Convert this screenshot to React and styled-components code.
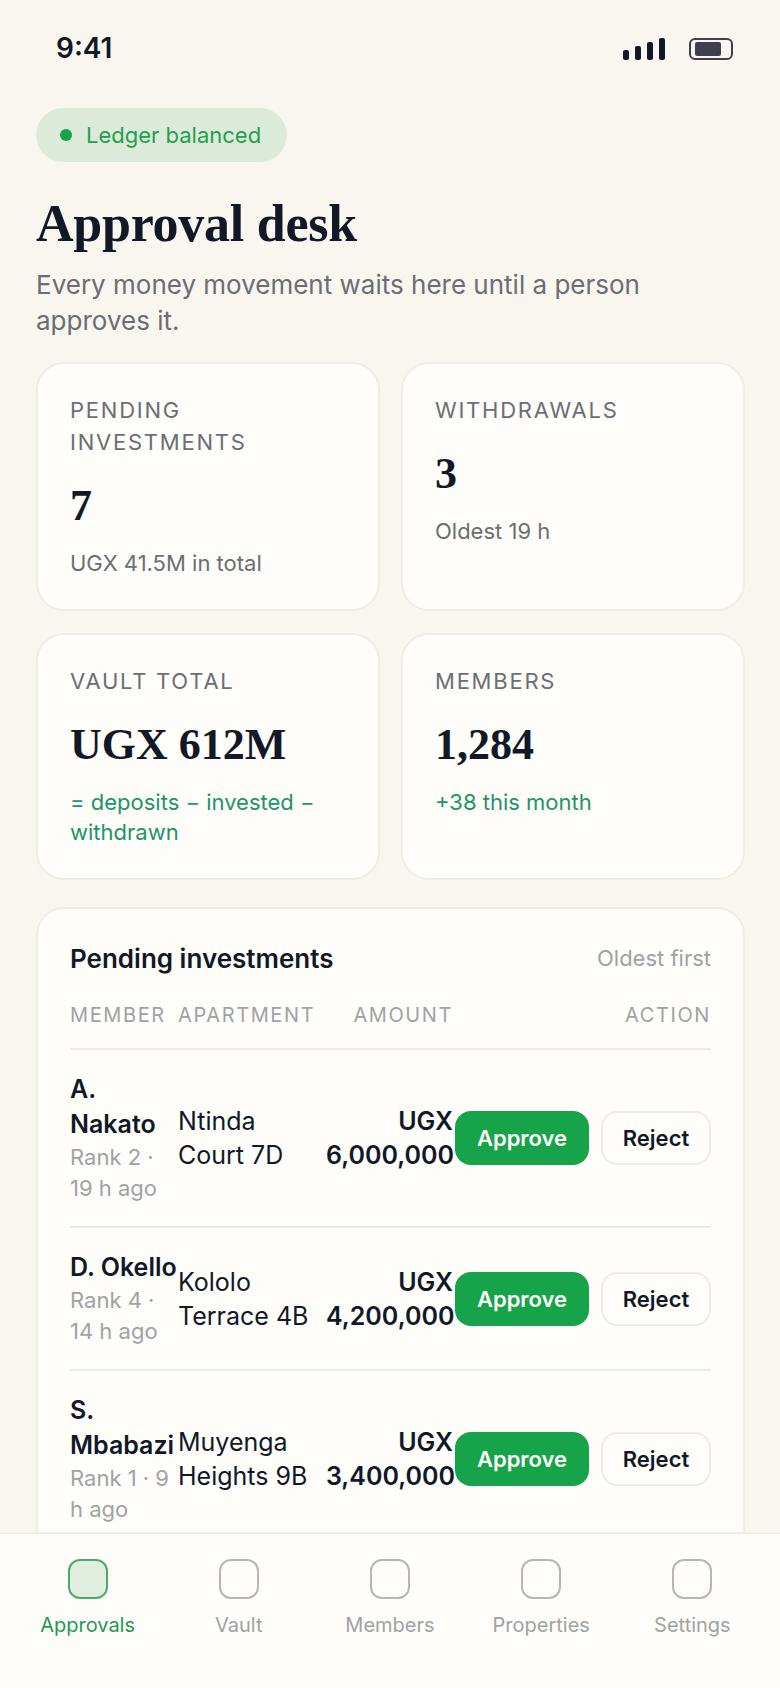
import React from "react";
import styled, { createGlobalStyle } from "styled-components";

const stats = [
    { label: "Pending investments", value: "7", note: "UGX 41.5M in total" },
    { label: "Withdrawals", value: "3", note: "Oldest 19 h" },
    { label: "Vault total", value: "UGX 612M", note: "= deposits − invested − withdrawn", good: true },
    { label: "Members", value: "1,284", note: "+38 this month", good: true },
];

const pending = [
    { name: "A. Nakato", meta: "Rank 2 · 19 h ago", apartment: "Ntinda Court 7D", amount: "UGX 6,000,000" },
    { name: "D. Okello", meta: "Rank 4 · 14 h ago", apartment: "Kololo Terrace 4B", amount: "UGX 4,200,000" },
    { name: "S. Mbabazi", meta: "Rank 1 · 9 h ago", apartment: "Muyenga Heights 9B", amount: "UGX 3,400,000" },
];

const tabs = ["Approvals", "Vault", "Members", "Properties", "Settings"];

export default function App(){
    return(
        <Shell>
            <GlobalStyle/>
            <StatusBar>
                <Clock>9:41</Clock>
                <StatusIcons>
                    <SignalBars>
                        {[10, 14, 18, 22].map(h => <SignalBar key={h} $height={h}/>)}
                    </SignalBars>
                    <Battery><BatteryFill/></Battery>
                </StatusIcons>
            </StatusBar>

            <Content>
                <Pill><PillDot/>Ledger balanced</Pill>
                <Title>Approval desk</Title>
                <Subtitle>Every money movement waits here until a person approves it.</Subtitle>

                <StatGrid>
                    {stats.map(stat => (
                        <StatCard key={stat.label}>
                            <StatLabel>{stat.label}</StatLabel>
                            <StatValue>{stat.value}</StatValue>
                            <StatNote $good={stat.good}>{stat.note}</StatNote>
                        </StatCard>
                    ))}
                </StatGrid>

                <Panel>
                    <PanelHeader>
                        <PanelTitle>Pending investments</PanelTitle>
                        <PanelHint>Oldest first</PanelHint>
                    </PanelHeader>
                    <TableHead>
                        <HeadCell>Member</HeadCell>
                        <HeadCell>Apartment</HeadCell>
                        <HeadCell $right>Amount</HeadCell>
                        <HeadCell $right>Action</HeadCell>
                    </TableHead>
                    {pending.map(row => (
                        <TableRow key={row.name}>
                            <MemberCell>
                                <MemberName>{row.name}</MemberName>
                                <MemberMeta>{row.meta}</MemberMeta>
                            </MemberCell>
                            <ApartmentCell>{row.apartment}</ApartmentCell>
                            <AmountCell>{row.amount}</AmountCell>
                            <ActionCell>
                                <ApproveButton>Approve</ApproveButton>
                                <RejectButton>Reject</RejectButton>
                            </ActionCell>
                        </TableRow>
                    ))}
                </Panel>
            </Content>

            <TabBar>
                {tabs.map((tab, i) => (
                    <Tab key={tab} $active={i === 0}>
                        <TabIcon $active={i === 0}/>
                        {tab}
                    </Tab>
                ))}
            </TabBar>
        </Shell>
    )
}


const GlobalStyle = createGlobalStyle`
    * {
        box-sizing: border-box;
    }
    body {
        margin: 0;
        background: #f9f6ef;
        font-family: Inter, "Noto Sans", sans-serif;
        color: #111827;
    }
`

const Shell = styled.div`
    height: 1688px;
    display: flex;
    flex-direction: column;
    overflow: hidden;
    background: #f9f6ef;
`

const StatusBar = styled.div`
    height: 96px;
    flex: none;
    display: flex;
    align-items: center;
    justify-content: space-between;
    padding: 0 47px 0 56px;
`

const Clock = styled.span`
    font-size: 28px;
    font-weight: 600;
    color: #111827;
`

const StatusIcons = styled.div`
    display: flex;
    align-items: center;
    gap: 24px;
    padding-top: 2px;
`

const SignalBars = styled.div`
    display: flex;
    align-items: flex-end;
    gap: 6px;
    height: 22px;
`

const SignalBar = styled.span`
    width: 6px;
    height: ${props => props.$height}px;
    border-radius: 2px;
    background: #111827;
`

const Battery = styled.div`
    width: 44px;
    height: 22px;
    border: 2px solid #3f3f4d;
    border-radius: 6px;
    padding: 2px 10px 2px 4px;
`

const BatteryFill = styled.div`
    height: 100%;
    border-radius: 2px;
    background: #3f3f4d;
`

const Content = styled.div`
    flex: 1;
    min-height: 0;
    overflow: hidden;
    padding: 12px 35px 0 36px;
`

const Pill = styled.div`
    display: inline-flex;
    align-items: center;
    gap: 14px;
    height: 54px;
    padding: 0 26px 0 24px;
    border-radius: 27px;
    background: #dcebd9;
    color: #1fa04f;
    font-size: 22px;
`

const PillDot = styled.span`
    width: 12px;
    height: 12px;
    border-radius: 50%;
    background: #16a34a;
`

const Title = styled.h1`
    margin: 34px 0 15px;
    font-family: "Liberation Serif", serif;
    font-size: 52px;
    line-height: 56px;
    font-weight: 700;
    letter-spacing: -0.25px;
    color: #111827;
`

const Subtitle = styled.p`
    margin: 0;
    font-size: 26px;
    line-height: 36px;
    color: #6b6e73;
`

const StatGrid = styled.div`
    display: grid;
    grid-template-columns: 1fr 1fr;
    gap: 22px 21px;
    margin-top: 23px;
`

const StatCard = styled.div`
    padding: 30px 32px 31px;
    border: 2px solid #efede6;
    border-radius: 28px;
    background: #fefdf9;
`

const StatLabel = styled.div`
    font-size: 22px;
    line-height: 32px;
    letter-spacing: 1.76px;
    text-transform: uppercase;
    color: #6b6e73;
`

const StatValue = styled.div`
    margin: 18px 0 12px;
    font-family: "Liberation Serif", serif;
    font-size: 44px;
    line-height: 60px;
    font-weight: 700;
    color: #111827;
`

const StatNote = styled.div`
    font-size: 22px;
    line-height: 30px;
    color: ${props => props.$good ? "#1f946a" : "#6b6e73"};
`

const Panel = styled.div`
    margin-top: 27px;
    padding: 31px 32px 24px;
    border: 2px solid #efede6;
    border-radius: 28px;
    background: #fefdf9;
`

const PanelHeader = styled.div`
    display: flex;
    align-items: center;
    justify-content: space-between;
    height: 36px;
`

const PanelTitle = styled.div`
    font-size: 26px;
    font-weight: 600;
    color: #111827;
`

const PanelHint = styled.div`
    font-size: 22px;
    color: #a0a2a4;
`

const TableHead = styled.div`
    display: grid;
    grid-template-columns: 108px 148px 127px 1fr;
    margin-top: 25px;
    padding-bottom: 19px;
    border-bottom: 2px solid #ecebe4;
`

const HeadCell = styled.div`
    font-size: 20px;
    line-height: 28px;
    letter-spacing: 1.6px;
    text-transform: uppercase;
    color: #a0a2a4;
    text-align: ${props => props.$right ? "right" : "left"};
`

const TableRow = styled.div`
    display: grid;
    grid-template-columns: 108px 148px 127px 1fr;
    align-items: center;
    border-bottom: 2px solid #ecebe4;
`

const MemberCell = styled.div`
    padding: 22px 0;
`

const MemberName = styled.div`
    font-size: 25px;
    line-height: 35px;
    font-weight: 600;
    color: #111827;
`

const MemberMeta = styled.div`
    font-size: 22px;
    line-height: 31px;
    color: #a0a2a4;
`

const ApartmentCell = styled.div`
    font-size: 25px;
    line-height: 34px;
    color: #111827;
`

const AmountCell = styled.div`
    font-size: 25px;
    line-height: 34px;
    font-weight: 600;
    text-align: right;
    color: #111827;
`

const ActionCell = styled.div`
    display: flex;
    justify-content: flex-end;
    gap: 12px;
`

const ApproveButton = styled.button`
    width: 134px;
    height: 54px;
    border: 0;
    border-radius: 16px;
    background: #16a34a;
    color: #fefdf9;
    font-family: inherit;
    font-size: 22px;
    font-weight: 600;
`

const RejectButton = styled.button`
    width: 110px;
    height: 54px;
    border: 2px solid #efede6;
    border-radius: 16px;
    background: #fefdf9;
    color: #111827;
    font-family: inherit;
    font-size: 22px;
    font-weight: 600;
`

const TabBar = styled.div`
    flex: none;
    height: 156px;
    display: grid;
    grid-template-columns: repeat(5, 1fr);
    padding: 25px 12px 0;
    border-top: 2px solid #efede6;
    background: #fefdf9;
`

const Tab = styled.div`
    display: flex;
    flex-direction: column;
    align-items: center;
    gap: 13px;
    font-size: 20px;
    line-height: 26px;
    color: ${props => props.$active ? "#1f9a55" : "#a0a2a4"};
`

const TabIcon = styled.span`
    width: 40px;
    height: 40px;
    border-radius: 12px;
    border: 2px solid ${props => props.$active ? "#4aab70" : "#b7b7b2"};
    background: ${props => props.$active ? "#e0eddf" : "transparent"};
`
